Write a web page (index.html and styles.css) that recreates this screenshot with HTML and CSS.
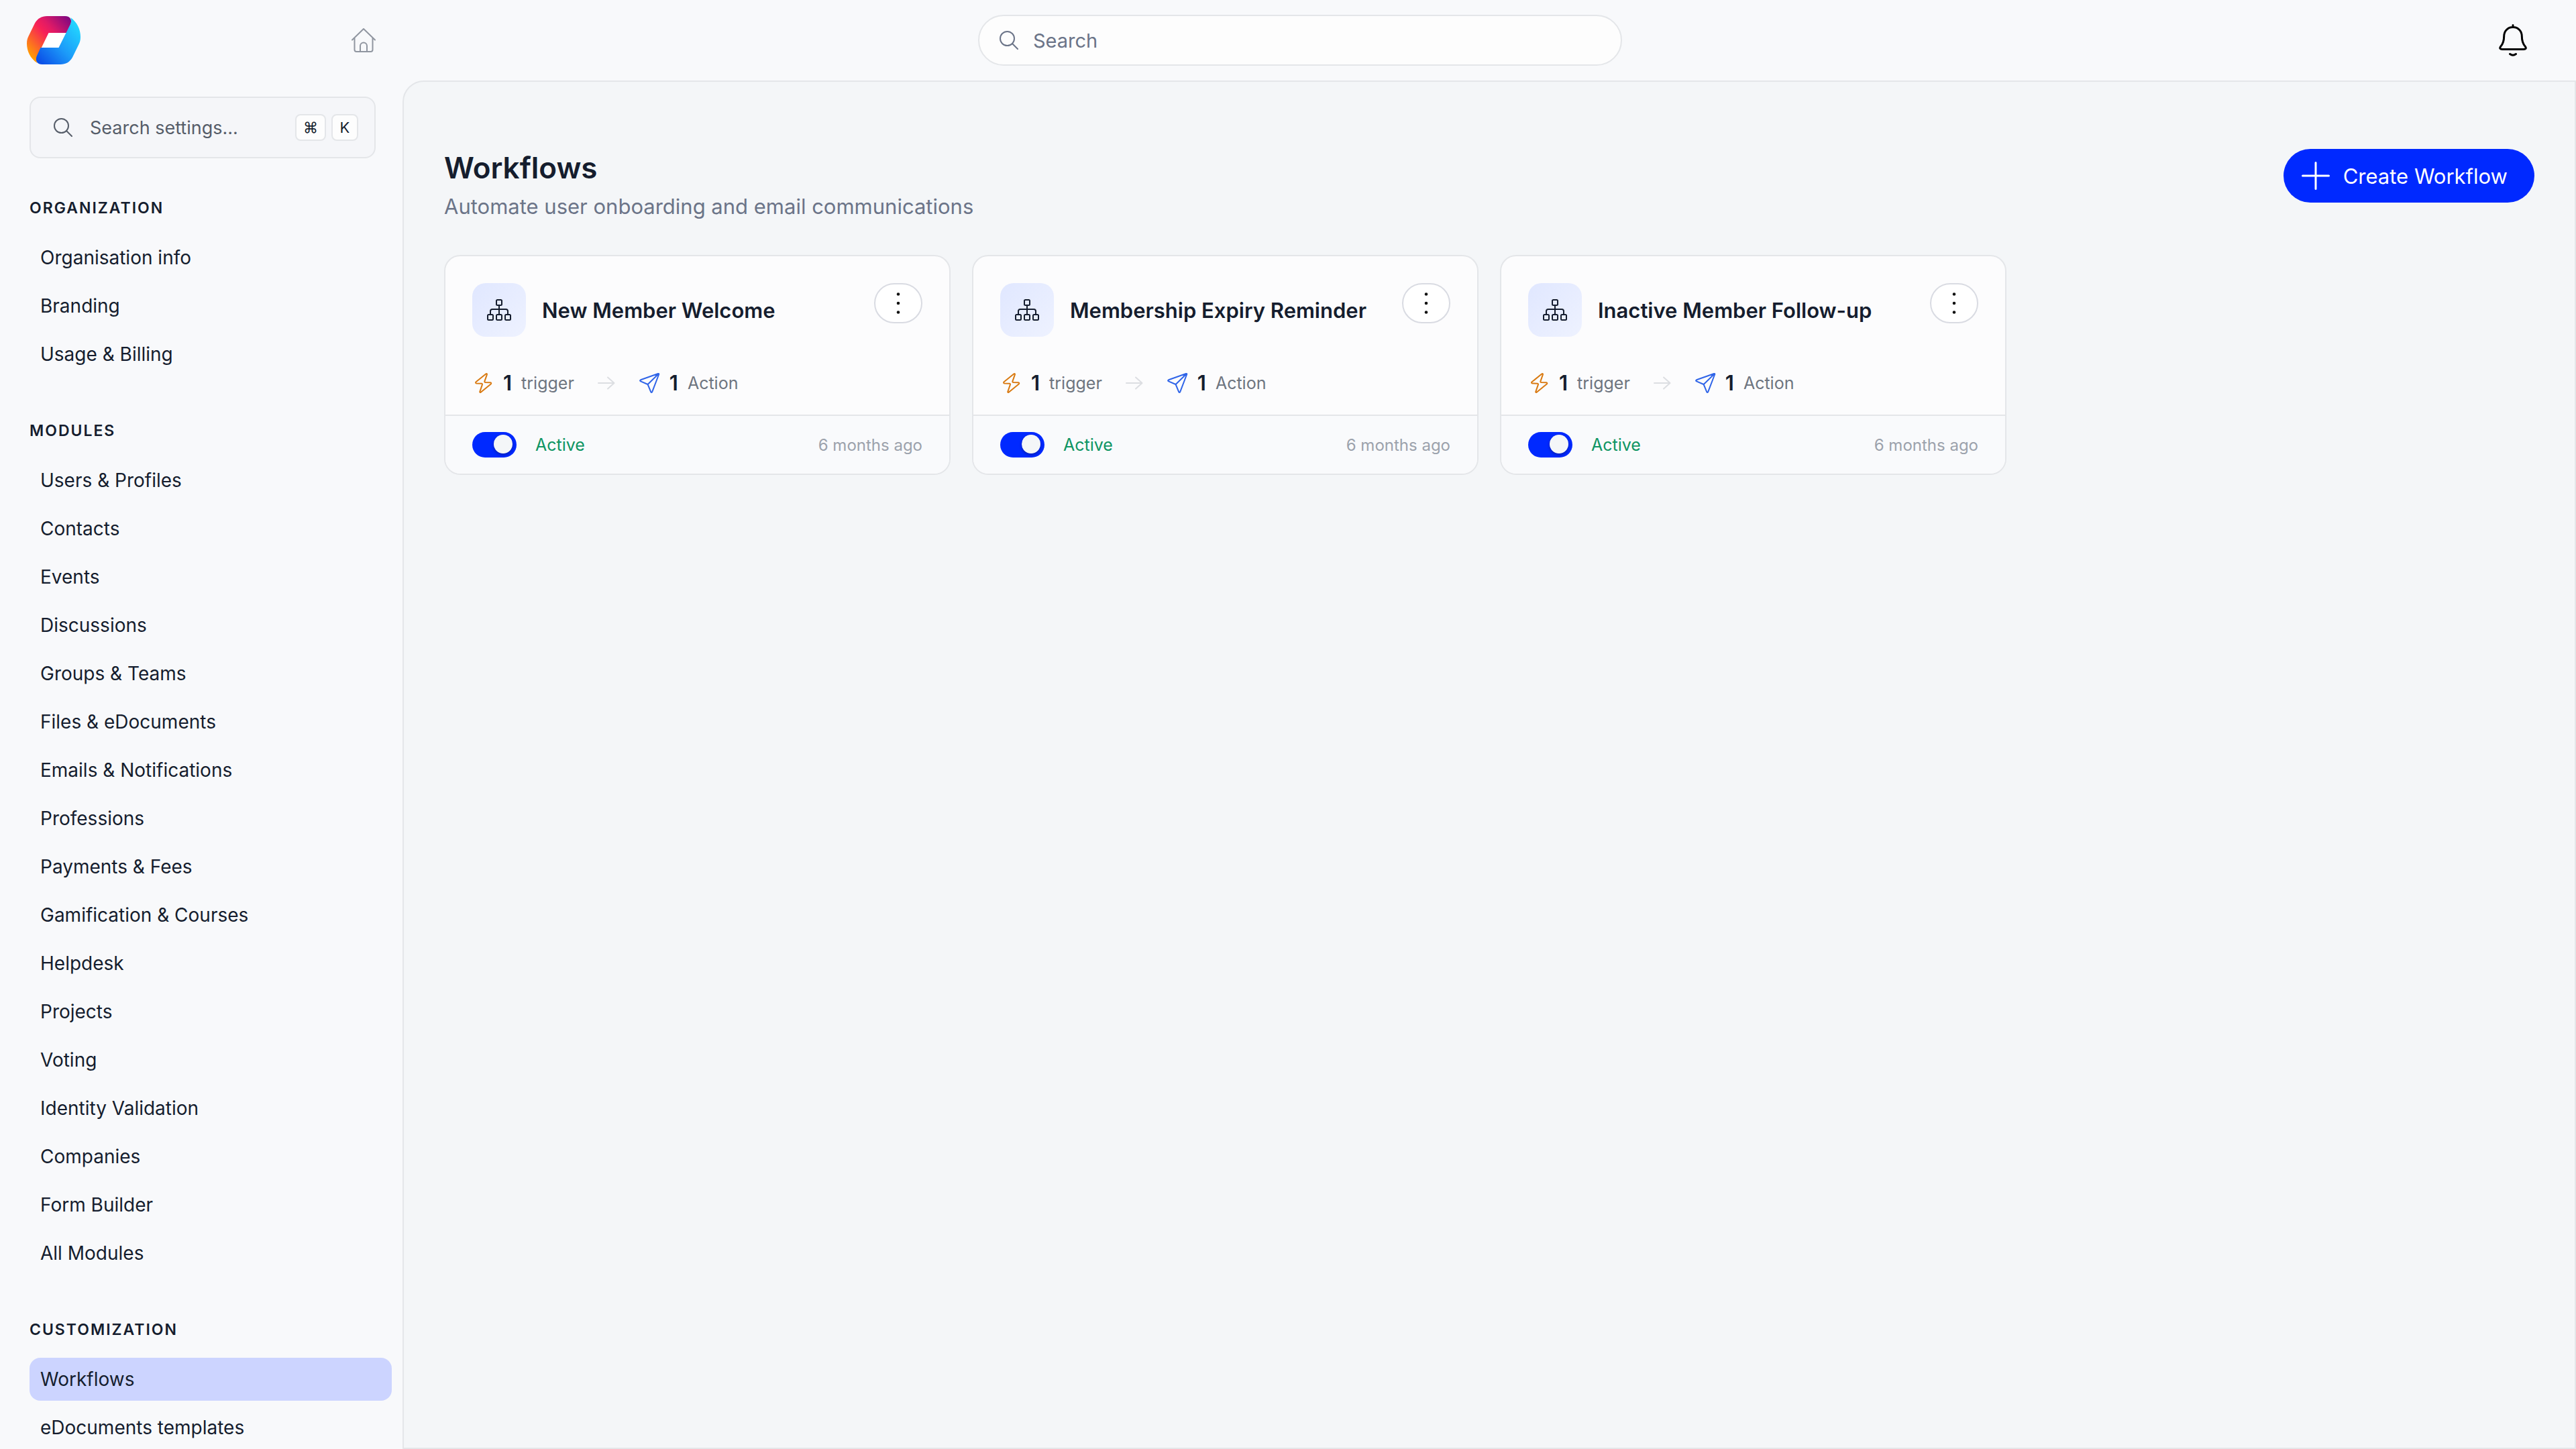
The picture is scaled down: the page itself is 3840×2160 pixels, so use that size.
FILE: index.html
```html
<!DOCTYPE html>
<html lang="en">

<head>
    <meta charset="UTF-8">
    <meta name="viewport" content="width=device-width, initial-scale=1.0">
    <title>Workflows</title>
    <link rel="stylesheet" href="styles.css">
</head>

<body>
    <!-- Shared icons -->
    <svg class="icon-defs" width="0" height="0" aria-hidden="true">
        <symbol id="icon-search" viewBox="0 0 28 28">
            <circle cx="11.5" cy="11.5" r="10.5" />
            <path d="M19 19l8 8" />
        </symbol>
        <symbol id="icon-flow" viewBox="0 0 36 32">
            <rect x="14" y="1" width="8" height="8" rx="1.5" />
            <rect x="1" y="23" width="8" height="8" rx="1.5" />
            <rect x="14" y="23" width="8" height="8" rx="1.5" />
            <rect x="27" y="23" width="8" height="8" rx="1.5" />
            <path d="M18 9v14M5 23v-5q0-3 3-3h20q3 0 3 3v5" />
        </symbol>
        <symbol id="icon-bolt" viewBox="0 0 32 32">
            <path d="M20.5 2.3L5.6 14.3c-1 .9-.6 2 .6 2.1l7.6.4c1 .1 1.4.7 1.1 1.6l-3.6 10.4c-.3 1.1.5 1.6 1.4.9l15-12.3c1-.9.6-2-.6-2.1l-7.6-.3c-1-.1-1.4-.7-1.1-1.6l3.5-10.1c.3-1.2-.5-1.7-1.4-1z" />
        </symbol>
        <symbol id="icon-arrow" viewBox="0 0 32 32">
            <path d="M4 16h23M18 7.500l9.500 8.500-9.500 8.500" />
        </symbol>
        <symbol id="icon-send" viewBox="0 0 32 32">
            <path d="M29 2L3 11.300c-1.200.5-1.200 1.500 0 2l10.600 4.700 4.700 11.300c.5 1.100 1.500 1 1.900-.1L30.200 3c.2-.9-.3-1.300-1.200-1zM13.600 18L29.700 2.300" />
        </symbol>
        <symbol id="icon-dots" viewBox="0 0 32 32">
            <circle cx="16" cy="2.500" r="2.300" />
            <circle cx="16" cy="16" r="2.300" />
            <circle cx="16" cy="29.500" r="2.300" />
        </symbol>
    </svg>

    <header class="topbar">
        <div class="topbar-left">
            <a class="logo" href="#" aria-label="Dashboard">
                <svg width="80" height="72" viewBox="0 0 80 72">
                    <defs>
                        <linearGradient id="logoWarm" gradientUnits="userSpaceOnUse" x1="6" y1="62" x2="66" y2="8">
                            <stop offset="0" stop-color="#ffa000" />
                            <stop offset="0.5" stop-color="#f72058" />
                            <stop offset="0.65" stop-color="#e01a66" />
                            <stop offset="1" stop-color="#85097f" />
                        </linearGradient>
                        <linearGradient id="logoCool" gradientUnits="userSpaceOnUse" x1="16" y1="68" x2="74" y2="14">
                            <stop offset="0" stop-color="#0a4be6" />
                            <stop offset="0.5" stop-color="#1c9af9" />
                            <stop offset="1" stop-color="#22d3fe" />
                        </linearGradient>
                    </defs>
                    <path fill="#fff" d="M32 24h28L48 48H20z" />
                    <path fill="url(#logoWarm)" d="M30 0h27c8 0 11 6 8 13l-5.500 12H32.500L15.500 60c-1.500 4-1.500 7 0 10C5 63 0 52 0 41c0-5 1-8 2.500-11L12 10.500C16 3.500 22 0 30 0z" />
                    <path fill="url(#logoCool)" d="M50 72H23c-8 0-11-6-8-13l5.500-12h27L65 12c1.500-4 1.500-7 0-10 10 7 15 18 15 29 0 5-1 8-2.500 11L68 61.500C64 68.500 58 72 50 72z" />
                </svg>
            </a>
            <a class="home" href="#" aria-label="Home">
                <svg width="36" height="36" viewBox="0 0 36 36">
                    <path d="M1 17.500L18 1l17 16.500M4.500 14.500V32q0 3 3 3h21q3 0 3-3V14.500M13 35v-8.500a5 5 0 0 1 10 0V35" />
                </svg>
            </a>
        </div>
        <label class="search">
            <svg width="28" height="28" aria-hidden="true"><use href="#icon-search" /></svg>
            <input type="text" placeholder="Search" aria-label="Search">
        </label>
        <button class="bell" type="button" aria-label="Notifications">
            <svg width="42" height="48" viewBox="0 0 42 48">
                <path d="M21 1.500v3M21 4.500C13 4.500 7.700 10.500 7.700 18c0 7-1 11-5.200 15.500-1.700 2.500-.5 4 2.500 4h32c3 0 4.200-1.500 2.500-4C35.300 29 34.300 25 34.300 18 34.300 10.500 29 4.500 21 4.500zM16.500 44.500q4.500 3.500 9 0" />
            </svg>
        </button>
    </header>

    <div class="layout">
        <aside class="sidebar">
            <label class="settings-search">
                <svg width="28" height="28" aria-hidden="true"><use href="#icon-search" /></svg>
                <input type="text" placeholder="Search settings..." aria-label="Search settings">
                <kbd>⌘</kbd>
                <kbd>K</kbd>
            </label>

            <nav class="menu">
                <h2>ORGANIZATION</h2>
                <a href="#">Organisation info</a>
                <a href="#">Branding</a>
                <a href="#">Usage &amp; Billing</a>
            </nav>

            <nav class="menu">
                <h2>MODULES</h2>
                <a href="#">Users &amp; Profiles</a>
                <a href="#">Contacts</a>
                <a href="#">Events</a>
                <a href="#">Discussions</a>
                <a href="#">Groups &amp; Teams</a>
                <a href="#">Files &amp; eDocuments</a>
                <a href="#">Emails &amp; Notifications</a>
                <a href="#">Professions</a>
                <a href="#">Payments &amp; Fees</a>
                <a href="#">Gamification &amp; Courses</a>
                <a href="#">Helpdesk</a>
                <a href="#">Projects</a>
                <a href="#">Voting</a>
                <a href="#">Identity Validation</a>
                <a href="#">Companies</a>
                <a href="#">Form Builder</a>
                <a href="#">All Modules</a>
            </nav>

            <nav class="menu">
                <h2>CUSTOMIZATION</h2>
                <a class="active" href="#">Workflows</a>
                <a href="#">eDocuments templates</a>
            </nav>
        </aside>

        <main class="content">
            <div class="page-head">
                <div>
                    <h1>Workflows</h1>
                    <p>Automate user onboarding and email communications</p>
                </div>
                <button class="create" type="button">
                    <svg width="42" height="42" viewBox="0 0 42 42" aria-hidden="true">
                        <path d="M21 1.500v39M1.500 21h39" />
                    </svg>
                    Create Workflow
                </button>
            </div>

            <div class="cards">
                <article class="card">
                    <div class="card-head">
                        <span class="tile"><svg width="36" height="32"><use href="#icon-flow" /></svg></span>
                        <h3>New Member Welcome</h3>
                        <button class="more" type="button" aria-label="More options"><svg width="32" height="32"><use href="#icon-dots" /></svg></button>
                    </div>
                    <div class="stats">
                        <span class="stat"><svg class="bolt" width="32" height="32"><use href="#icon-bolt" /></svg><b>1</b> trigger</span>
                        <svg class="arrow" width="32" height="32"><use href="#icon-arrow" /></svg>
                        <span class="stat"><svg class="send" width="32" height="32"><use href="#icon-send" /></svg><b>1</b> Action</span>
                    </div>
                    <div class="card-foot">
                        <label class="toggle"><input type="checkbox" checked> Active</label>
                        <span class="time">6 months ago</span>
                    </div>
                </article>

                <article class="card">
                    <div class="card-head">
                        <span class="tile"><svg width="36" height="32"><use href="#icon-flow" /></svg></span>
                        <h3>Membership Expiry Reminder</h3>
                        <button class="more" type="button" aria-label="More options"><svg width="32" height="32"><use href="#icon-dots" /></svg></button>
                    </div>
                    <div class="stats">
                        <span class="stat"><svg class="bolt" width="32" height="32"><use href="#icon-bolt" /></svg><b>1</b> trigger</span>
                        <svg class="arrow" width="32" height="32"><use href="#icon-arrow" /></svg>
                        <span class="stat"><svg class="send" width="32" height="32"><use href="#icon-send" /></svg><b>1</b> Action</span>
                    </div>
                    <div class="card-foot">
                        <label class="toggle"><input type="checkbox" checked> Active</label>
                        <span class="time">6 months ago</span>
                    </div>
                </article>

                <article class="card">
                    <div class="card-head">
                        <span class="tile"><svg width="36" height="32"><use href="#icon-flow" /></svg></span>
                        <h3>Inactive Member Follow-up</h3>
                        <button class="more" type="button" aria-label="More options"><svg width="32" height="32"><use href="#icon-dots" /></svg></button>
                    </div>
                    <div class="stats">
                        <span class="stat"><svg class="bolt" width="32" height="32"><use href="#icon-bolt" /></svg><b>1</b> trigger</span>
                        <svg class="arrow" width="32" height="32"><use href="#icon-arrow" /></svg>
                        <span class="stat"><svg class="send" width="32" height="32"><use href="#icon-send" /></svg><b>1</b> Action</span>
                    </div>
                    <div class="card-foot">
                        <label class="toggle"><input type="checkbox" checked> Active</label>
                        <span class="time">6 months ago</span>
                    </div>
                </article>
            </div>
        </main>
    </div>
</body>

</html>
```
FILE: styles.css
```css
* {
    box-sizing: border-box;
}

body {
    display: flex;
    flex-direction: column;
    height: 100vh;
    margin: 0;
    overflow: hidden;
    background-color: #f8f9fb;
    color: #151d2e;
    font-family: Inter, "Liberation Sans", sans-serif;
    font-size: 28px;
}

h1,
h2,
h3,
p {
    margin: 0;
}

a {
    color: inherit;
    text-decoration: none;
}

button,
input {
    font-family: inherit;
    color: inherit;
}

svg {
    flex: none;
    fill: none;
    stroke: currentColor;
    stroke-width: 2;
    stroke-linecap: round;
    stroke-linejoin: round;
}

.icon-defs {
    position: absolute;
}

/* Top bar */
.topbar {
    display: grid;
    grid-template-columns: 1fr 960px 1fr;
    align-items: center;
    flex: none;
    height: 120px;
    padding: 0 4px 0 40px;
}

.topbar-left {
    display: flex;
    align-items: center;
    justify-content: space-between;
    width: 520px;
}

.logo,
.home {
    display: flex;
}

.logo svg {
    stroke: none;
}

.home {
    color: #9096a0;
}

.search {
    display: flex;
    align-items: center;
    gap: 22px;
    height: 76px;
    padding: 0 30px;
    border: 2px solid #e4e6e9;
    border-radius: 38px;
    background-color: #fdfdfd;
    color: #6b7488;
}

.search input,
.settings-search input {
    flex: 1;
    min-width: 0;
    padding: 0;
    border: none;
    outline: none;
    background: none;
    font-size: 29px;
}

input::placeholder {
    color: inherit;
    opacity: 1;
}

.bell {
    display: flex;
    justify-self: end;
    margin-right: 59px;
    padding: 10px;
    border: none;
    background: none;
    color: #000;
}

.bell svg {
    stroke-width: 3;
}

/* Sidebar */
.layout {
    display: flex;
    flex: 1;
    min-height: 0;
}

.sidebar {
    flex: none;
    width: 600px;
    padding: 24px 16px 0 44px;
    overflow: hidden;
}

.settings-search {
    display: flex;
    align-items: center;
    gap: 8px;
    height: 92px;
    margin: 0 24px 58px 0;
    padding: 0 24px 0 34px;
    border: 2px solid #e4e6e9;
    border-radius: 16px;
    background-color: #f5f6f9;
    color: #565d69;
}

.settings-search input {
    margin-left: 18px;
    font-size: 27px;
}

kbd {
    display: flex;
    align-items: center;
    justify-content: center;
    min-width: 40px;
    height: 40px;
    padding: 0 10px;
    border: 2px solid #e4e6e9;
    border-radius: 8px;
    background-color: #fdfdfd;
    color: #151d2e;
    font-family: inherit;
    font-size: 22px;
}

.menu {
    display: flex;
    flex-direction: column;
    gap: 8px;
    margin-bottom: 66px;
}

.menu h2 {
    margin-bottom: 18px;
    font-size: 23px;
    font-weight: 600;
    line-height: 32px;
    letter-spacing: 2px;
}

.menu a {
    padding: 0 16px;
    border-radius: 16px;
    line-height: 64px;
}

.menu .active {
    background-color: #ccd4ff;
}

/* Page */
.content {
    flex: 1;
    padding: 100px 60px;
    border: 2px solid #e4e6e9;
    border-top-left-radius: 32px;
    background-color: #f4f6f8;
}

.page-head {
    display: flex;
    align-items: flex-start;
    justify-content: space-between;
    margin-bottom: 48px;
}

.page-head h1 {
    font-size: 44px;
    font-weight: 600;
    line-height: 56px;
}

.page-head p {
    margin-top: 6px;
    color: #6b7488;
    font-size: 31px;
    line-height: 48px;
}

.create {
    display: flex;
    align-items: center;
    gap: 20px;
    height: 80px;
    padding: 0 40px 0 27px;
    border: none;
    border-radius: 40px;
    background-color: #0029ff;
    color: #fff;
    font-size: 31px;
}

.create svg {
    stroke-width: 3;
}

/* Workflow cards */
.cards {
    display: grid;
    grid-template-columns: repeat(4, 1fr);
    gap: 32px;
}

.card {
    border: 2px solid #e4e6e9;
    border-radius: 24px;
    background-color: #fcfcfd;
    overflow: hidden;
}

.card-head {
    display: flex;
    align-items: center;
    gap: 24px;
    padding: 40px 40px 0;
}

.tile {
    display: flex;
    align-items: center;
    justify-content: center;
    width: 80px;
    height: 80px;
    border-radius: 20px;
    background: linear-gradient(135deg, #e0e7ff, #eef2ff);
}

.card-head h3 {
    flex: 1;
    font-size: 31px;
    font-weight: 600;
}

.more {
    display: flex;
    align-items: center;
    justify-content: center;
    align-self: flex-start;
    width: 72px;
    height: 60px;
    padding: 0;
    border: 2px solid #d9dbe2;
    border-radius: 30px;
    background-color: #fff;
    color: #111;
}

.more svg {
    fill: currentColor;
    stroke: none;
}

.stats {
    display: flex;
    align-items: center;
    gap: 32px;
    padding: 49px 40px 27px;
    line-height: 40px;
}

.stat {
    display: flex;
    align-items: center;
    gap: 14px;
    color: #6e7580;
    font-size: 25px;
}

.stat b {
    color: #151d2e;
    font-size: 31px;
    font-weight: 600;
}

.bolt {
    color: #d97a12;
}

.arrow {
    color: #dcdee2;
}

.send {
    color: #2f64e8;
}

.card-foot {
    display: flex;
    align-items: center;
    justify-content: space-between;
    padding: 24px 40px;
    border-top: 2px solid #e4e6e9;
    background-color: #f9fafc;
}

.toggle {
    display: flex;
    align-items: center;
    gap: 28px;
    color: #0f9563;
    font-size: 25px;
}

.toggle input {
    display: flex;
    justify-content: flex-end;
    appearance: none;
    width: 66px;
    height: 38px;
    margin: 0;
    padding: 4px 6px;
    border-radius: 19px;
    background-color: #0029ff;
}

.toggle input::before {
    content: "";
    width: 28px;
    height: 28px;
    border-radius: 50%;
    background-color: #f4f6f8;
    box-shadow: 0 2px 4px rgba(0, 0, 0, 0.3);
}

.toggle input:not(:checked) {
    justify-content: flex-start;
    background-color: #c3c8d2;
}

.time {
    color: #9ca2ac;
    font-size: 24px;
}
```
